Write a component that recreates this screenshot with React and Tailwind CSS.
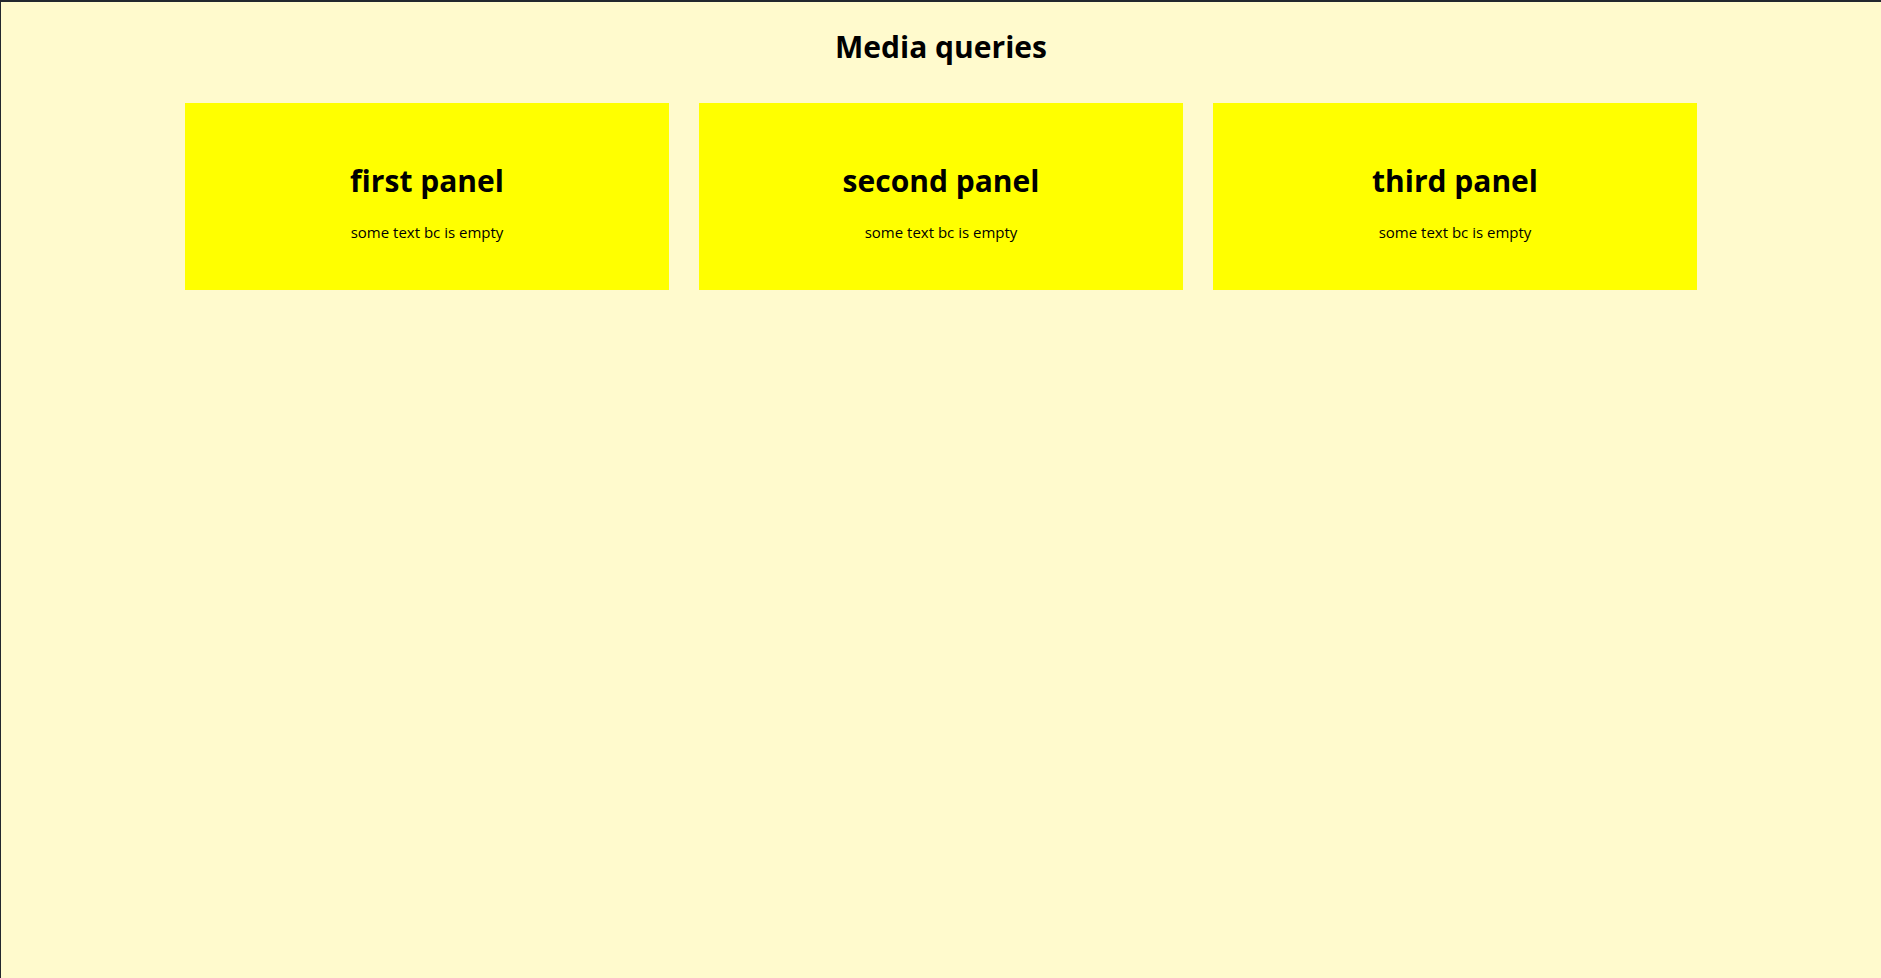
import React from 'react';

const panels = [
  { id: 1, title: 'first panel', text: 'some text bc is empty' },
  { id: 2, title: 'second panel', text: 'some text bc is empty' },
  { id: 3, title: 'third panel', text: 'some text bc is empty' },
];

const Panel = ({ title, text }) => (
  <div className="h-[187px] bg-[#ffff00] pt-[60px] text-center">
    <h2 className="text-[30px] leading-[36px] font-bold text-black">{title}</h2>
    <p className="mt-[21px] text-[15px] leading-[24px] text-black">{text}</p>
  </div>
);

const App = () => {
  return (
    <div className="min-h-screen bg-[#fffacd] border-t-2 border-l border-[#23272e] font-['Open_Sans',sans-serif]">
      <h1 className="pt-[25px] text-center text-[30px] leading-[40px] font-bold text-black">Media queries</h1>
      <div className="mx-auto mt-[36px] grid w-[1512px] grid-cols-3 gap-[30px]">
        {panels.map(p => <Panel key={p.id} title={p.title} text={p.text} />)}
      </div>
    </div>
  );
};

export default App;
